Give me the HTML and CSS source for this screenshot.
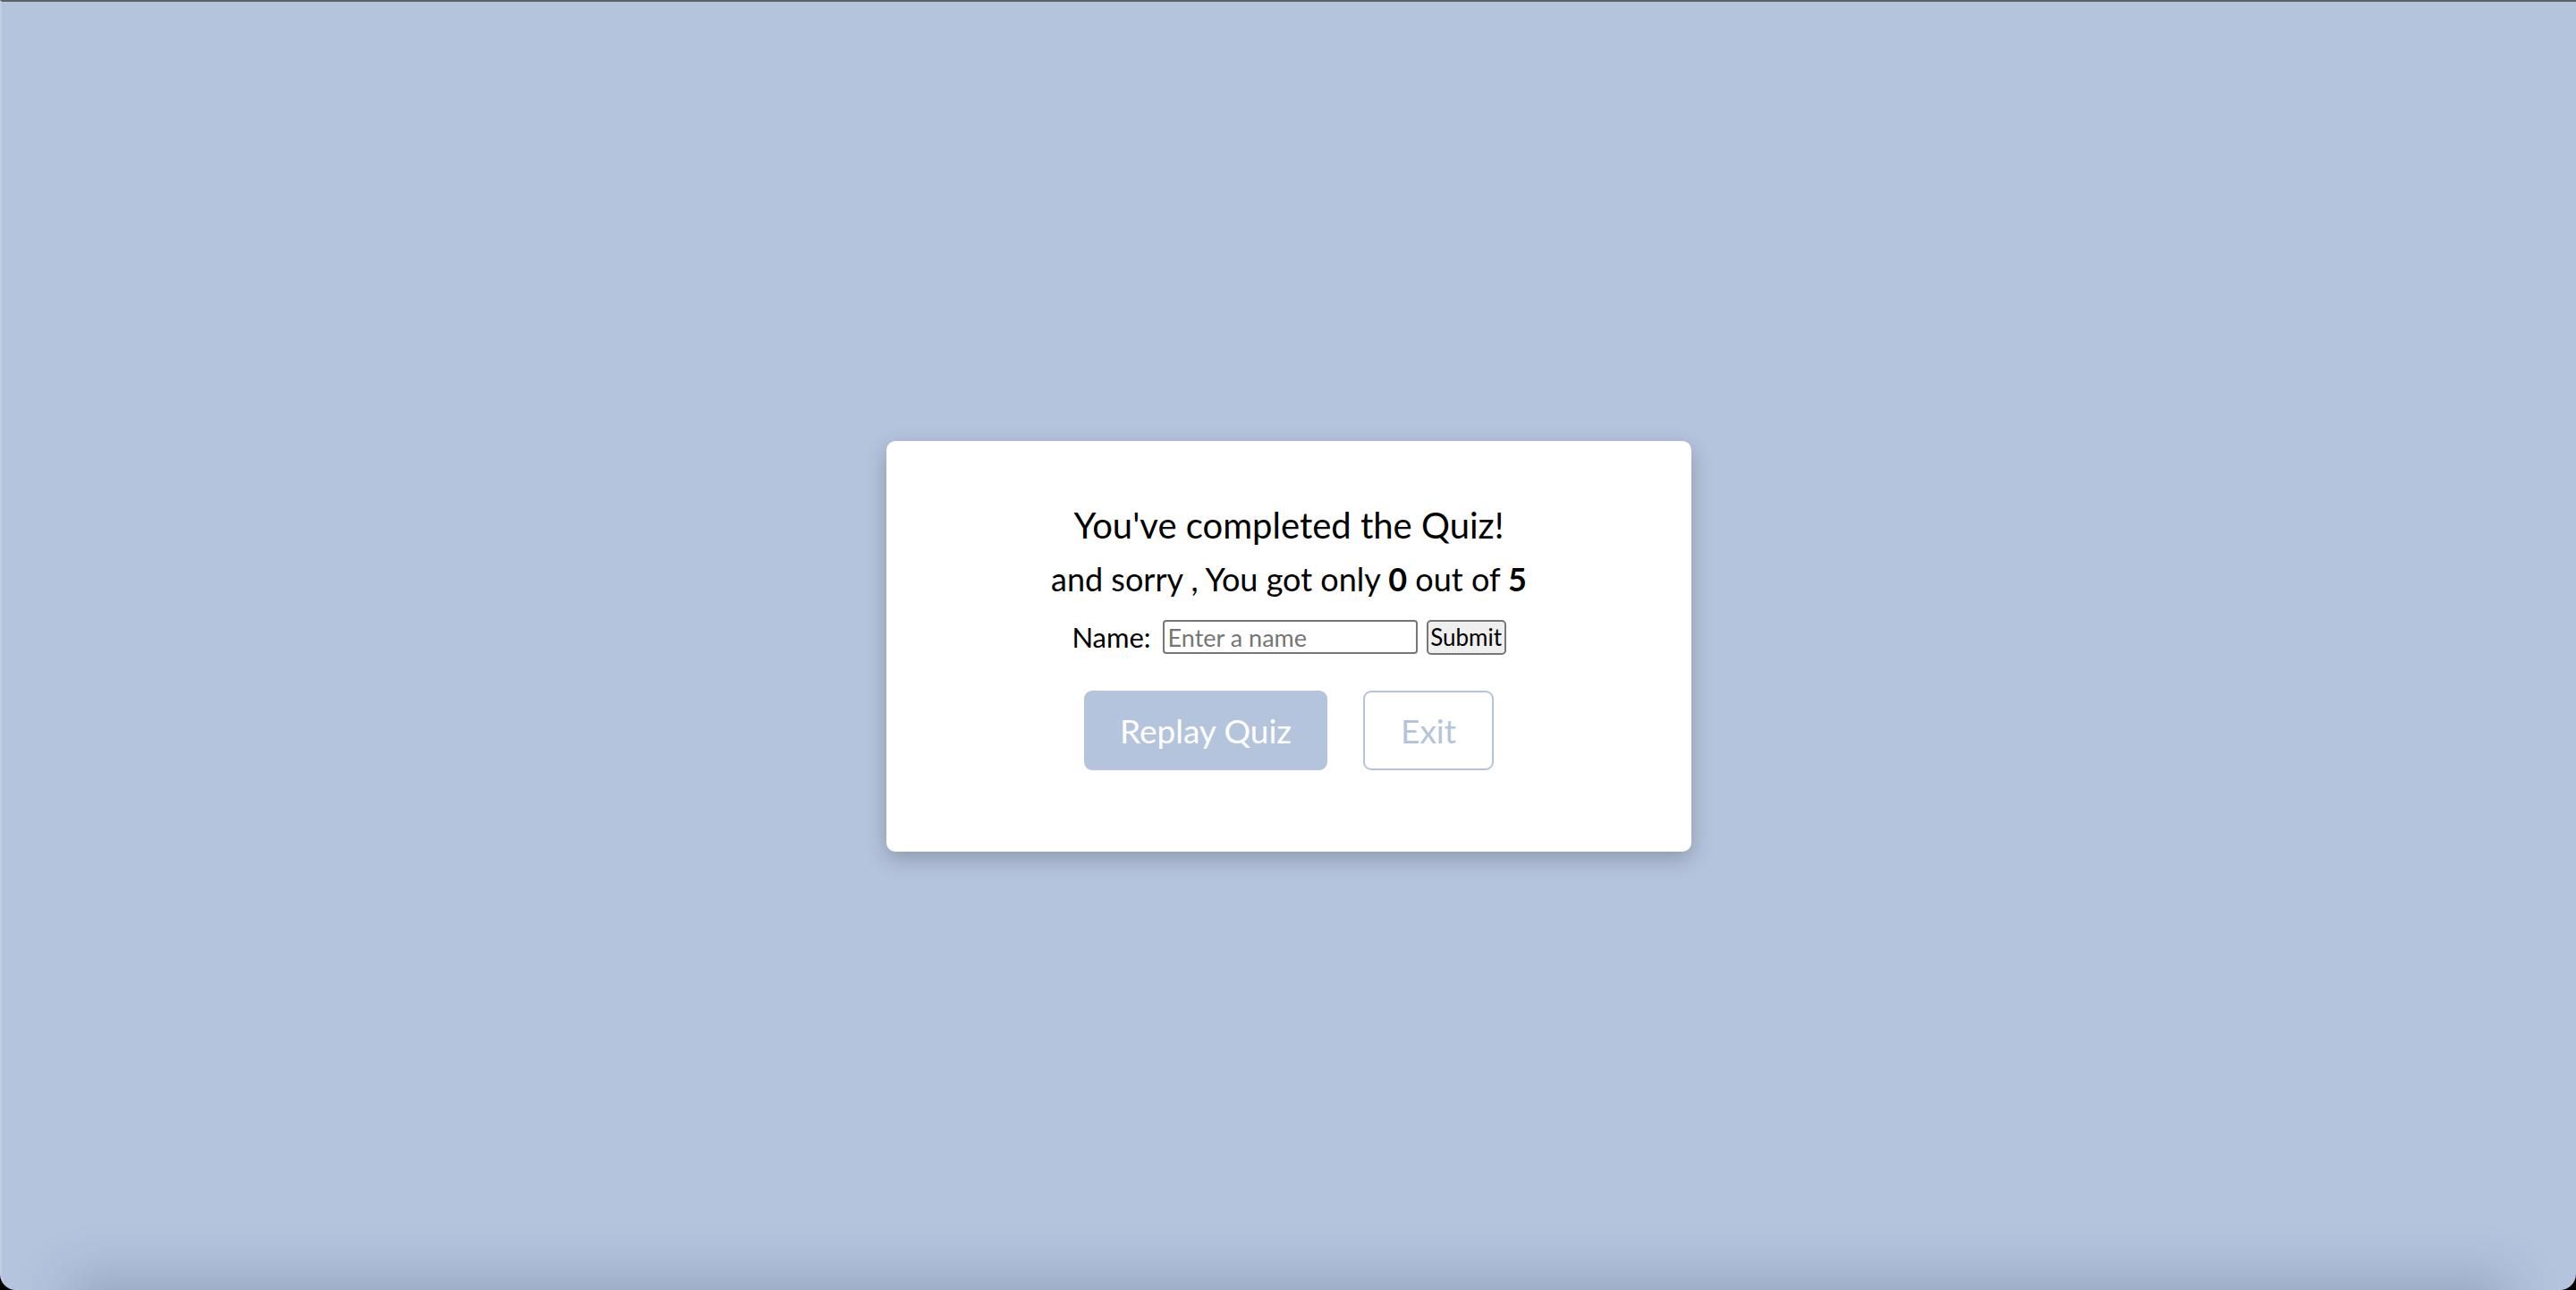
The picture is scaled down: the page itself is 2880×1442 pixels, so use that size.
FILE: index.html
```html
<!DOCTYPE html>
<html lang="en">
<head>
<meta charset="utf-8">
<title>Quiz Result</title>
<link rel="stylesheet" href="styles.css">
</head>
<body>
<div class="window">
  <div class="card">
    <h2 class="title">You've completed the Quiz!</h2>
    <p class="score">and sorry , You got only <b>0</b> out of <b>5</b></p>
    <form class="name-row">
      <label class="name-label" for="name">Name:</label>
      <input class="name-input" id="name" type="text" placeholder="Enter a name">
      <button class="submit-btn" type="button">Submit</button>
    </form>
    <div class="actions">
      <button class="btn btn-replay" type="button">Replay Quiz</button>
      <button class="btn btn-exit" type="button">Exit</button>
    </div>
  </div>
  <div class="dock-shadow"></div>
</div>
</body>
</html>
```

FILE: styles.css
```css
html, body {
  margin: 0;
  padding: 0;
  height: 100%;
  background: #000;
}

body {
  font-family: Lato, "Open Sans", "Liberation Sans", sans-serif;
  color: #000;
}

.window {
  position: relative;
  box-sizing: border-box;
  height: 100vh;
  background: #b4c4dd;
  border-top: 2px solid #5f6064;
  border-left: 2px solid #c3cde0;
  border-radius: 0 0 18px 18px;
  overflow: hidden;
  display: flex;
  align-items: center;
  justify-content: center;
}

.dock-shadow {
  position: absolute;
  left: 90px;
  right: 90px;
  bottom: -40px;
  height: 40px;
  box-shadow: 0 0 60px 14px rgba(40, 50, 80, 0.22);
}

.card {
  width: 900px;
  box-sizing: border-box;
  padding: 70px 0 91px;
  background: #fff;
  border-radius: 10px;
  box-shadow: 0 8px 24px rgba(0, 0, 0, 0.22);
  display: flex;
  flex-direction: column;
  align-items: center;
  text-align: center;
}

.title {
  margin: 0;
  font-size: 40px;
  line-height: 48px;
  font-weight: 400;
}

.score {
  margin: 17px 0 0;
  font-size: 36px;
  line-height: 38px;
}

.score b {
  font-weight: 700;
}

.name-row {
  margin: 27px 0 0;
  display: flex;
  align-items: center;
  height: 39px;
}

.name-label {
  font-size: 31px;
  line-height: 38px;
  margin-right: 13px;
}

.name-input {
  box-sizing: border-box;
  width: 285px;
  height: 38px;
  padding: 2px 4px;
  border: 2px solid #767676;
  border-radius: 4px;
  font-family: inherit;
  font-size: 27px;
  color: #000;
  background: #fff;
  margin: 0 10px 0 0;
}

.name-input::placeholder {
  color: #757575;
}

.submit-btn {
  box-sizing: border-box;
  width: 89px;
  height: 39px;
  padding: 0;
  border: 2px solid #767676;
  border-radius: 5px;
  background: #efefef;
  font-family: inherit;
  font-size: 26px;
  color: #000;
}

.actions {
  margin-top: 40px;
  display: flex;
  gap: 40px;
}

.btn {
  box-sizing: border-box;
  height: 89px;
  border-radius: 9px;
  font-family: inherit;
  font-size: 37px;
  padding: 0;
}

.btn-replay {
  width: 272px;
  background: #b4c4dd;
  border: 2px solid #b4c4dd;
  color: #fff;
}

.btn-exit {
  width: 146px;
  background: #fff;
  border: 2px solid #b4c4dd;
  color: #b4c4dd;
}
```
